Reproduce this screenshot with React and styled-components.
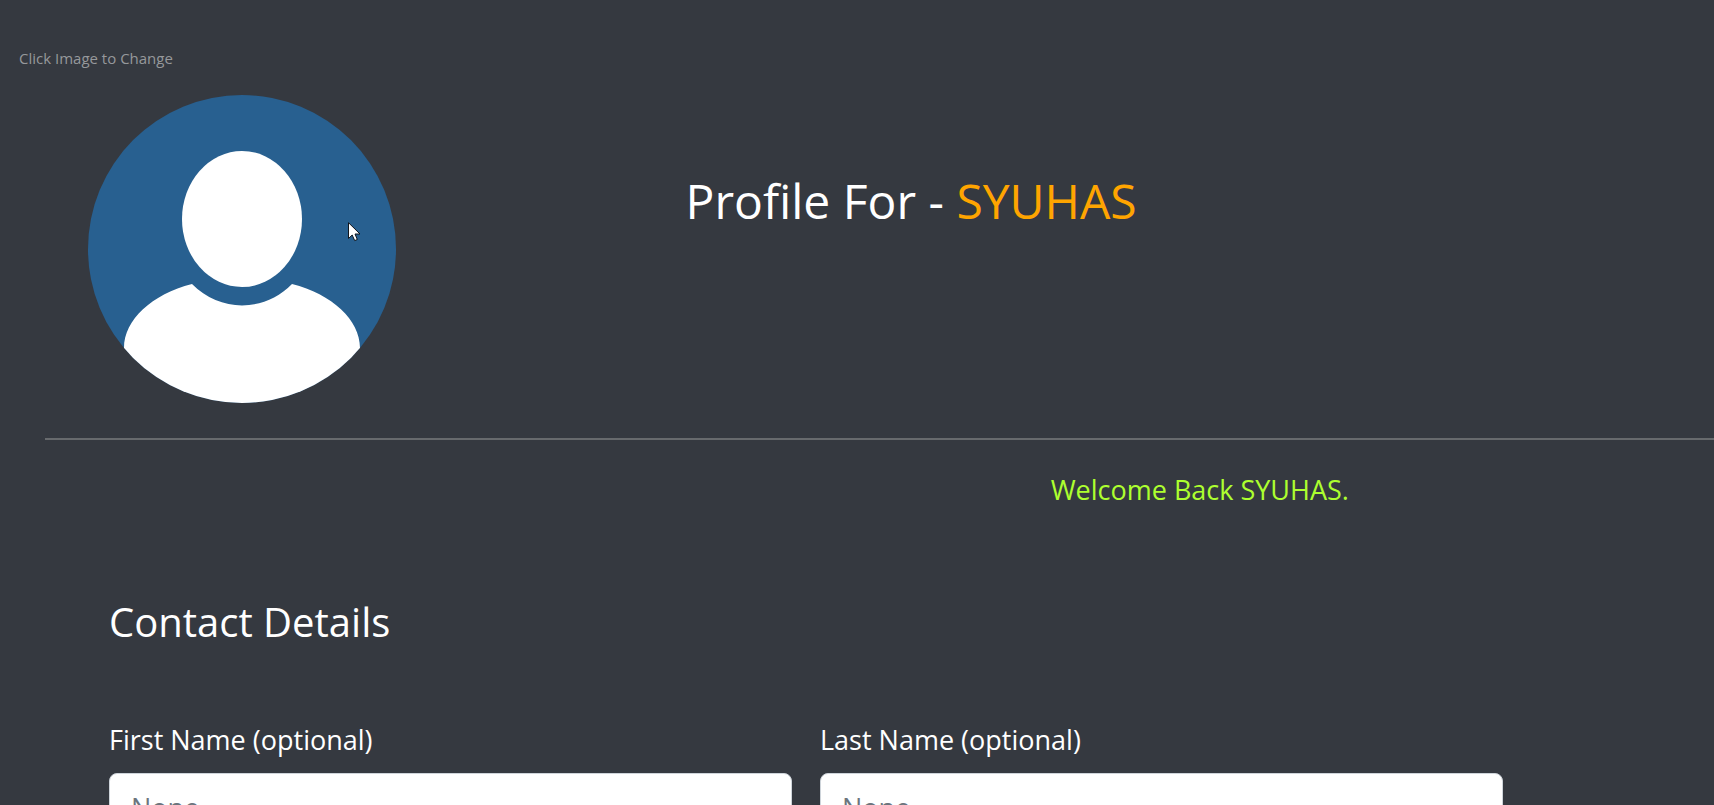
import React from "react";
import styled, { createGlobalStyle } from "styled-components";

const GlobalStyle = createGlobalStyle`
  *, *::before, *::after { box-sizing: border-box; }
  html { scrollbar-width: none; }
  body {
    margin: 0;
    background: #353940;
    color: #fff;
    font-family: "Segoe UI", "Open Sans", "Noto Sans", sans-serif;
  }
`;

const Page = styled.main`
  min-height: 100vh;
  padding: 48px 0;
`;

const Header = styled.header`
  display: grid;
  grid-template-columns: 40% 1fr;
`;

const AvatarField = styled.div`
  display: flex;
  flex-direction: column;
  gap: 27px;
`;

const Hint = styled.label`
  padding-left: 19px;
  font-size: 15px;
  line-height: 20px;
  color: #96989b;
`;

const AvatarButton = styled.button`
  position: relative;
  width: 308px;
  height: 308px;
  margin-left: 88px;
  padding: 0;
  border: 0;
  border-radius: 50%;
  background: none;
  cursor: pointer;
`;

const AvatarImage = styled.svg`
  display: block;
  width: 100%;
  height: 100%;
`;

const Pointer = styled.svg`
  position: absolute;
  left: 260px;
  top: 127px;
`;

const Title = styled.h1`
  margin: 0;
  padding-top: 119px;
  font-size: 48px;
  font-weight: 400;
  line-height: 68px;
`;

const UserName = styled.span`
  color: orange;
`;

const Divider = styled.hr`
  margin: 35px 0 0 45px;
  height: 2px;
  border: 0;
  background: #676a6d;
`;

const Welcome = styled.p`
  margin: 30px 0 0;
  padding-left: 40%;
  font-size: 27px;
  line-height: 40px;
  text-align: center;
  color: greenyellow;
`;

const ContactForm = styled.form`
  margin: 82px 211px 0 109px;
`;

const SectionTitle = styled.h2`
  margin: 0;
  font-size: 40px;
  font-weight: 400;
  line-height: 60px;
`;

const FieldRow = styled.div`
  display: grid;
  grid-template-columns: 1fr 1fr;
  gap: 28px;
  margin-top: 68px;
`;

const Field = styled.div`
  display: flex;
  flex-direction: column;
  gap: 13px;
`;

const FieldLabel = styled.label`
  font-size: 27px;
  line-height: 40px;
`;

const TextInput = styled.input`
  width: 100%;
  height: 68px;
  padding: 0 21px;
  border: 1px solid #ced4da;
  border-radius: 8px;
  background: #fff;
  color: #495057;
  font: inherit;
  font-size: 27px;
  &::placeholder { color: #6c757d; opacity: 1; }
`;

const fields = [
  { id: "first-name", label: "First Name (optional)" },
  { id: "last-name", label: "Last Name (optional)" },
];

export default function App() {
  return (
    <Page>
      <GlobalStyle />
      <Header>
        <AvatarField>
          <Hint htmlFor="avatar">Click Image to Change</Hint>
          <AvatarButton id="avatar" type="button">
            <AvatarImage viewBox="0 0 308 308" aria-hidden="true">
              <defs>
                <clipPath id="disc"><circle cx="154" cy="154" r="154" /></clipPath>
              </defs>
              <g clipPath="url(#disc)">
                <rect width="308" height="308" fill="#286090" />
                <ellipse cx="154" cy="124" rx="60" ry="68" fill="#fff" />
                <path
                  fill="#fff"
                  d="M104 189C132 217.500 176 217.500 204 189C244 199 272 225 272 253V308H36V253C36 225 64 199 104 189Z"
                />
              </g>
            </AvatarImage>
            <Pointer width="13" height="20" viewBox="0 0 13 20" aria-hidden="true">
              <path
                d="M0.500 0.700V16.500L4.200 13L6.700 18.600L9.300 17.500L7 12H12Z"
                fill="#fff"
                stroke="#10151c"
              />
            </Pointer>
          </AvatarButton>
        </AvatarField>
        <Title>Profile For - <UserName>SYUHAS</UserName></Title>
      </Header>
      <Divider />
      <Welcome>Welcome Back SYUHAS.</Welcome>
      <ContactForm>
        <SectionTitle>Contact Details</SectionTitle>
        <FieldRow>
          {fields.map(({ id, label }) => (
            <Field key={id}>
              <FieldLabel htmlFor={id}>{label}</FieldLabel>
              <TextInput id={id} name={id} type="text" placeholder="None" />
            </Field>
          ))}
        </FieldRow>
      </ContactForm>
    </Page>
  );
}
